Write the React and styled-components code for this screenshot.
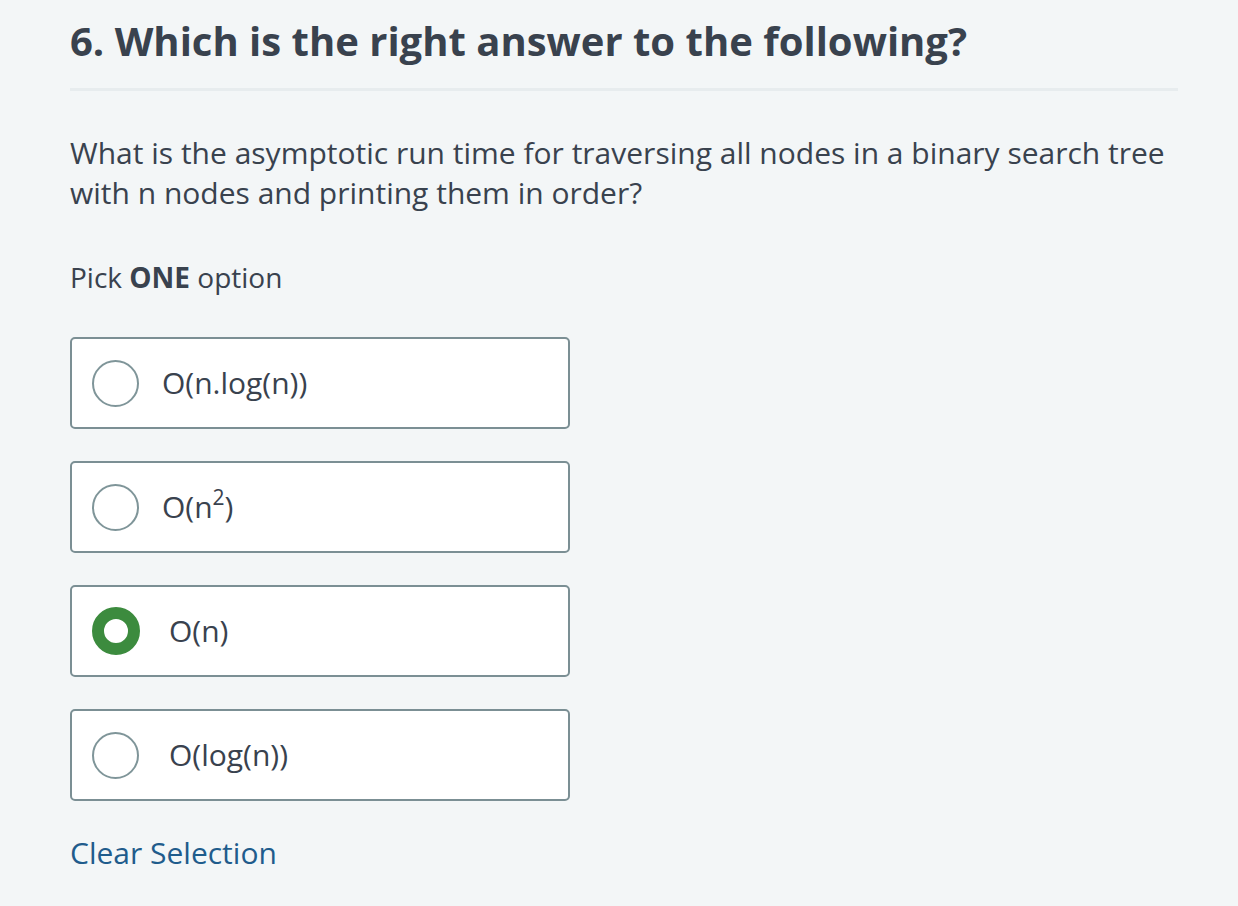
import React, { useState } from "react";
import styled, { createGlobalStyle } from "styled-components";

const Global = createGlobalStyle`
  html, body { margin: 0; padding: 0; background: #f3f6f7; }
  body { font-family: "Open Sans", "Liberation Sans", sans-serif; color: #39424e; }
`;

const Page = styled.div`
  width: 1108px;
  padding: 12px 0 0 70px;
  box-sizing: content-box;
`;

const Title = styled.h1`
  margin: 0;
  font-size: 40px;
  line-height: 58px;
  font-weight: 700;
  color: #39424e;
  padding-bottom: 18px;
  border-bottom: 3px solid #e7ecee;
`;

const Question = styled.p`
  margin: 42px 0 0;
  font-size: 30px;
  line-height: 40px;
  color: #39424e;
`;

const Hint = styled.p`
  margin: 44px 0 0;
  font-size: 28px;
  line-height: 40px;
  b { font-weight: 700; }
`;

const Options = styled.div`
  display: flex;
  flex-direction: column;
  gap: 32px;
  margin-top: 40px;
`;

const Option = styled.label`
  display: flex;
  align-items: center;
  box-sizing: border-box;
  width: 500px;
  height: 92px;
  padding-left: 20px;
  background: #fff;
  border: 2px solid #7b8f94;
  border-radius: 5px;
  cursor: pointer;
`;

const Radio = styled.span`
  flex: none;
  box-sizing: border-box;
  width: ${(p) => (p.$checked ? 48 : 47)}px;
  height: ${(p) => (p.$checked ? 48 : 47)}px;
  border-radius: 50%;
  background: #fff;
  border: ${(p) => (p.$checked ? "12px solid #3c8b3e" : "2px solid #7f9599")};
`;

const Label = styled.span`
  font-size: 30px;
  line-height: 40px;
  color: #39424e;
  margin-left: ${(p) => p.$gap}px;
  sup { font-size: 21px; line-height: 0; vertical-align: 13px; }
`;

const Clear = styled.a`
  display: inline-block;
  margin-top: 32px;
  font-size: 30px;
  line-height: 40px;
  color: #1f5c8c;
  text-decoration: none;
  cursor: pointer;
`;

const options = [
  { id: 0, label: "O(n.log(n))", gap: 23 },
  { id: 1, label: (<>O(n<sup>2</sup>)</>), gap: 23 },
  { id: 2, label: "O(n)", gap: 29 },
  { id: 3, label: "O(log(n))", gap: 30 },
];

export default function App() {
  const [sel, setSel] = useState(2);
  return (
    <>
      <Global />
      <Page>
        <Title>6. Which is the right answer to the following?</Title>
        <Question>
          What is the asymptotic run time for traversing all nodes in a binary search tree with n nodes and printing them in order?
        </Question>
        <Hint>
          Pick <b>ONE</b> option
        </Hint>
        <Options>
          {options.map((o) => (
            <Option key={o.id} onClick={() => setSel(o.id)}>
              <Radio $checked={sel === o.id} />
              <Label $gap={o.gap}>{o.label}</Label>
            </Option>
          ))}
        </Options>
        <Clear onClick={() => setSel(null)}>Clear Selection</Clear>
      </Page>
    </>
  );
}
